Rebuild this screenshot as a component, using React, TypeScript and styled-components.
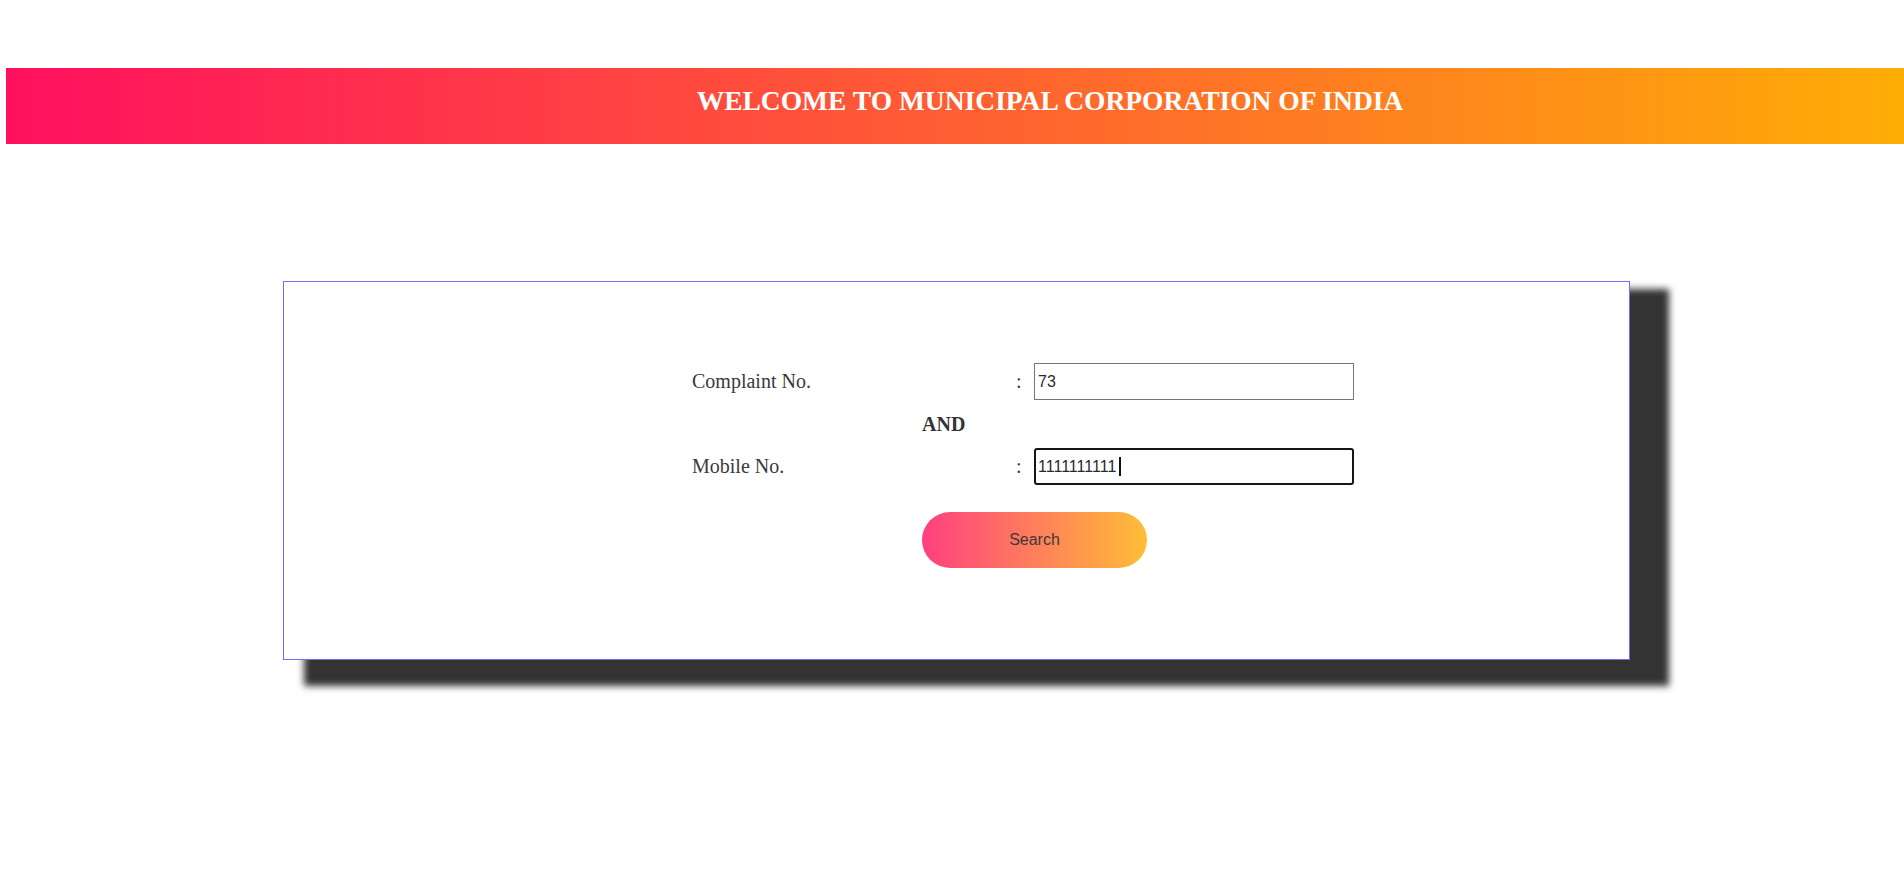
import React from "react";
import styled, { createGlobalStyle } from "styled-components";

const GlobalStyle = createGlobalStyle`
  body {
    margin: 0;
    background: #fff;
    font-family: "Liberation Serif", "Times New Roman", serif;
  }
`;

const Page = styled.div`
  padding-top: 68px;
  min-height: 823px;
`;

const Banner = styled.header`
  margin-left: 6px;
  height: 76px;
  padding: 0 0 10px 190px;
  box-sizing: border-box;
  display: flex;
  justify-content: center;
  align-items: center;
  background: linear-gradient(to right, #ff105f, #ffad06);
`;

const BannerTitle = styled.h1`
  margin: 0;
  font-family: "Liberation Serif", "Times New Roman", serif;
  font-size: 27.5px;
  font-weight: 700;
  color: #fff;
  white-space: nowrap;
`;

const Card = styled.section`
  margin: 137px 0 0 283px;
  width: 1347px;
  height: 379px;
  box-sizing: border-box;
  border: 1px solid #6f6ff7;
  background: #fff;
  box-shadow: 30px 17px 7px 9px #333;
  padding: 81px 0 0 408px;
`;

const Form = styled.form`
  display: grid;
  grid-template-columns: 324px 18px 320px;
  grid-template-rows: 37px 48px 37px;
  align-items: center;
`;

const Label = styled.label`
  font-size: 20px;
  color: #3a3a3a;
`;

const Colon = styled.span`
  font-size: 20px;
  color: #3a3a3a;
`;

const InputWrap = styled.div`
  position: relative;
  height: 37px;
`;

const Field = styled.input<{ $focused?: boolean }>`
  width: 100%;
  height: 100%;
  box-sizing: border-box;
  margin: 0;
  padding: 0 ${(p) => (p.$focused ? "2px" : "3px")};
  font-family: "Liberation Sans", Arial, sans-serif;
  font-size: 16px;
  color: #2a2a2a;
  background: #fff;
  border: ${(p) => (p.$focused ? "2px solid #161616" : "1px solid #767676")};
  border-radius: ${(p) => (p.$focused ? "3px" : "0")};
  outline: none;
`;

const Caret = styled.span`
  position: absolute;
  left: 85px;
  top: 9px;
  width: 1.5px;
  height: 19px;
  background: #111;
`;

const AndText = styled.div`
  grid-column: 1 / -1;
  padding-left: 230px;
  font-size: 20px;
  font-weight: 700;
  color: #333;
`;

const SearchButton = styled.button`
  grid-column: 1 / -1;
  justify-self: start;
  margin: 27px 0 0 230px;
  width: 225px;
  height: 56px;
  border: none;
  border-radius: 28px;
  background: linear-gradient(to right, rgba(255, 16, 95, 0.8), rgba(255, 173, 6, 0.8));
  font-family: "Liberation Sans", Arial, sans-serif;
  font-size: 16px;
  color: #3a3a3a;
  cursor: pointer;
`;

export default function App() {
  return (
    <Page>
      <GlobalStyle />
      <Banner>
        <BannerTitle>WELCOME TO MUNICIPAL CORPORATION OF INDIA</BannerTitle>
      </Banner>
      <Card>
        <Form onSubmit={(e) => e.preventDefault()}>
          <Label htmlFor="complaint">Complaint No.</Label>
          <Colon>:</Colon>
          <InputWrap>
            <Field id="complaint" defaultValue="73" />
          </InputWrap>

          <AndText>AND</AndText>

          <Label htmlFor="mobile">Mobile No.</Label>
          <Colon>:</Colon>
          <InputWrap>
            <Field id="mobile" defaultValue="1111111111" $focused />
            <Caret />
          </InputWrap>

          <SearchButton type="submit">Search</SearchButton>
        </Form>
      </Card>
    </Page>
  );
}
